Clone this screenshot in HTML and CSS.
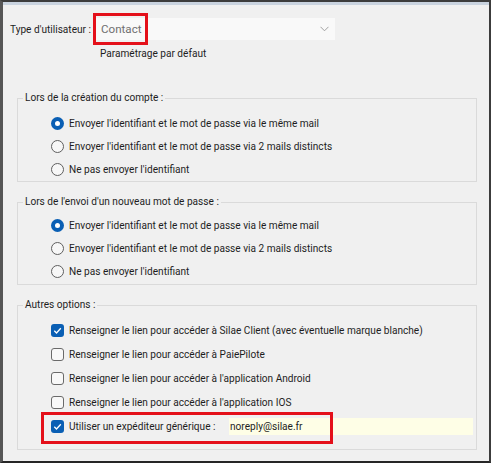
FILE: index.html
```html
<!DOCTYPE html>
<html lang="fr">
<head>
<meta charset="utf-8">
<link rel="stylesheet" href="styles.css">
</head>
<body>
<div class="window">
  <div class="type-grid">
    <span class="type-label">Type d'utilisateur :</span>
    <div class="combo">
      <span class="combo-value">Contact</span>
      <svg class="chevron" width="9" height="6" viewBox="0 0 9 6"><path d="M0.5 0.8 L4.5 4.8 L8.5 0.8" fill="none" stroke="#a0a0a0" stroke-width="1"/></svg>
      <span class="highlight hl-contact"></span>
    </div>
    <span class="default-note">Paramétrage par défaut</span>
  </div>

  <fieldset class="group g1">
    <legend>Lors de la création du compte :</legend>
    <label class="opt"><span class="radio checked"></span>Envoyer l'identifiant et le mot de passe via le même mail</label>
    <label class="opt"><span class="radio"></span>Envoyer l'identifiant et le mot de passe via 2 mails distincts</label>
    <label class="opt"><span class="radio"></span>Ne pas envoyer l'identifiant</label>
  </fieldset>

  <fieldset class="group g2">
    <legend>Lors de l'envoi d'un nouveau mot de passe :</legend>
    <label class="opt"><span class="radio checked"></span>Envoyer l'identifiant et le mot de passe via le même mail</label>
    <label class="opt"><span class="radio"></span>Envoyer l'identifiant et le mot de passe via 2 mails distincts</label>
    <label class="opt"><span class="radio"></span>Ne pas envoyer l'identifiant</label>
  </fieldset>

  <fieldset class="group g3">
    <legend>Autres options :</legend>
    <label class="opt chk-row"><span class="check checked"><svg width="13" height="13" viewBox="0 0 13 13"><path d="M3.3 6.8 L5.5 9 L9.8 4.3" fill="none" stroke="#fff" stroke-width="1.3"/></svg></span>Renseigner le lien pour accéder à Silae Client (avec éventuelle marque blanche)</label>
    <label class="opt chk-row"><span class="check"></span>Renseigner le lien pour accéder à PaiePilote</label>
    <label class="opt chk-row"><span class="check"></span>Renseigner le lien pour accéder à l'application Android</label>
    <label class="opt chk-row"><span class="check"></span>Renseigner le lien pour accéder à l'application IOS</label>
    <div class="opt chk-row sender">
      <span class="check checked"><svg width="13" height="13" viewBox="0 0 13 13"><path d="M3.3 6.8 L5.5 9 L9.8 4.3" fill="none" stroke="#fff" stroke-width="1.3"/></svg></span>
      <span class="sender-label">Utiliser un expéditeur générique :</span>
      <span class="sender-input">noreply@silae.fr</span>
      <span class="highlight hl-sender"></span>
    </div>
  </fieldset>
</div>
</body>
</html>
```

FILE: styles.css
```css
* { box-sizing: border-box; }
html, body { margin: 0; padding: 0; }
body {
  width: 491px;
  height: 463px;
  background: #3a3a3a;
  font-family: Roboto, "Noto Sans", "Liberation Sans", sans-serif;
  font-size: 10.1px;
  color: #1e1e1e;
}
.window {
  width: 491px;
  height: 463px;
  background: #f0f0f0;
  border-top: 2px solid #3c3c3c;
  border-left: 3px solid #565656;
  border-right: 2px solid #3c3c3c;
  border-bottom: 2px solid #262626;
  box-shadow: inset 0 3px 0 #c9d3df;
  padding: 16px 12px 0 14px;
  position: relative;
}
.type-grid {
  display: grid;
  grid-template-columns: 82px 239px;
  column-gap: 4px;
  row-gap: 6px;
  align-items: center;
  margin-left: -7px;
}
.type-label { white-space: nowrap; }
.combo {
  position: relative;
  height: 22px;
  background: #f9f9f9;
  display: flex;
  align-items: center;
  padding-left: 5px;
}
.combo-value {
  color: #707070;
  font-size: 11.6px;
  flex: 1;
}
.chevron { margin-right: 6px; }
.default-note {
  grid-column: 2;
  padding-left: 4px;
  line-height: 16px;
}
.highlight {
  position: absolute;
  border: 3px solid #e4101a;
  pointer-events: none;
}
.hl-contact { left: -3px; top: -5px; width: 55px; height: 32px; }
.group {
  margin: 0;
  border: 1px solid #dadada;
  padding: 0;
  width: 460px;
}
.group legend {
  padding: 0 2px;
  margin-left: 5px;
  line-height: 14px;
}
.g1 { margin-top: 29px; padding-top: 7px; padding-bottom: 0; }
.g2 { margin-top: 13px; padding-top: 5px; padding-bottom: 1px; }
.g3 { margin-top: 13px; padding-top: 6px; padding-bottom: 11px; }
.opt {
  display: flex;
  align-items: center;
  height: 23px;
  padding-left: 33px;
  white-space: nowrap;
}
.chk-row { height: 24px; }
.radio {
  width: 13px;
  height: 13px;
  border-radius: 50%;
  border: 1px solid #5f5f5f;
  background: #f7f7f7;
  margin-right: 5px;
  flex: none;
}
.radio.checked {
  border: none;
  background: #0a5fb4;
  position: relative;
}
.radio.checked::after {
  content: "";
  position: absolute;
  left: 4px; top: 4px;
  width: 5px; height: 5px;
  border-radius: 50%;
  background: #fff;
}
.check {
  width: 13px;
  height: 13px;
  border-radius: 3px;
  border: 1px solid #6a6a6a;
  background: #f8f8f8;
  margin-right: 5px;
  flex: none;
  display: flex;
}
.check.checked { border: none; background: #0a5fb4; }
.sender { position: relative; }
.sender-label { width: 160px; }
.sender-input {
  width: 244px;
  height: 17px;
  background: #fefee6;
  display: flex;
  align-items: center;
  padding-left: 1px;
}
.hl-sender { left: 23px; top: -2px; width: 292px; height: 32px; }
```
